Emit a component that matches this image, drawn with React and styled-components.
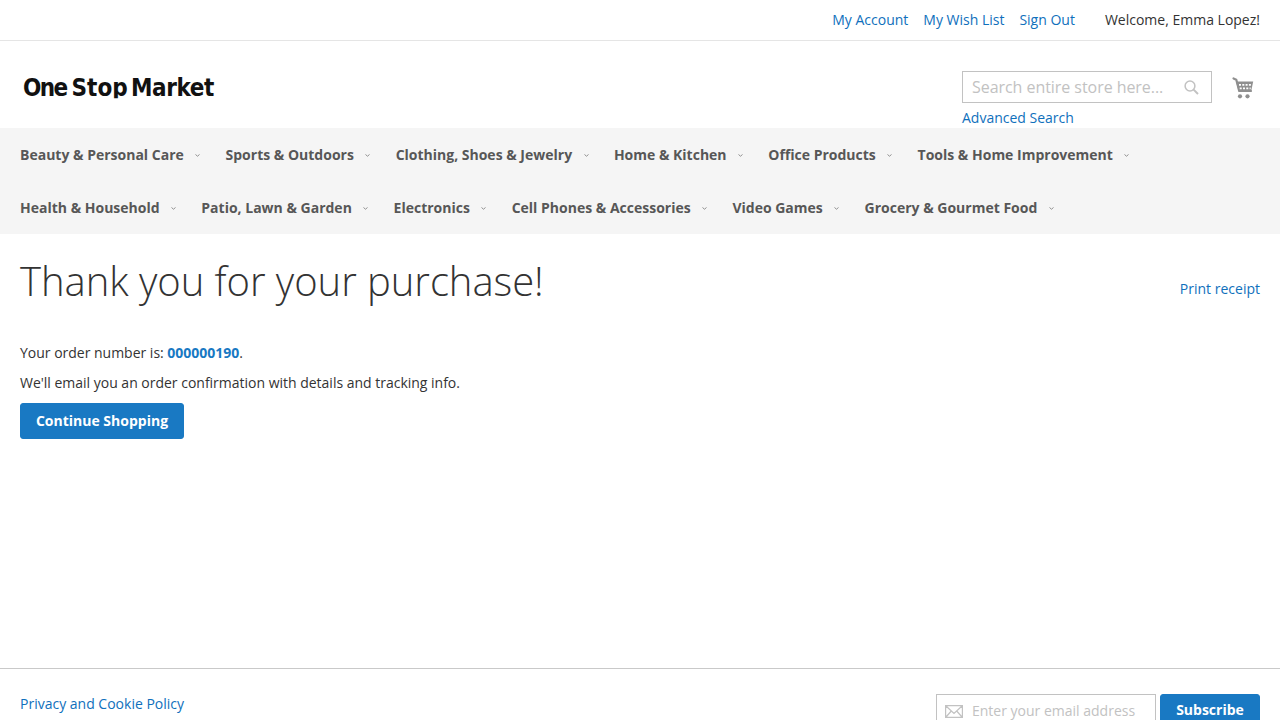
import React from 'react';
import styled, { createGlobalStyle } from 'styled-components';

const GlobalStyle = createGlobalStyle`
  *, *::before, *::after { box-sizing: border-box; }
  html, body { margin: 0; height: 100%; overflow: hidden; }
  body {
    background: #fff;
    color: #333;
    font: 400 14px/20px 'Open Sans', 'Noto Sans', sans-serif;
  }
`;

const Page = styled.div`
  display: flex;
  flex-direction: column;
`;

const Link = styled.a`
  color: ${(p) => (p.$strong ? '#1979c3' : '#0f70bc')};
  text-decoration: none;
  cursor: pointer;
  font-weight: ${(p) => (p.$strong ? 700 : 400)};
`;

const TopPanel = styled.div`
  display: flex;
  justify-content: flex-end;
  gap: 15px;
  height: 41px;
  padding: 10px 20px 0;
  border-bottom: 1px solid #e5e5e5;
`;

const Greeting = styled.span`
  margin-left: 15px;
`;

const Header = styled.header`
  display: flex;
  align-items: flex-start;
  height: 87px;
  padding: 30px 20px 0;
`;

/* The wordmark's descender is trimmed just under the baseline. */
const Logo = styled.div`
  display: flex;
  height: 34px;
  margin-right: auto;
  padding-left: 3px;
  clip-path: inset(0 0 6.7px 0);
  color: #111;
  font: 700 24px/34px 'DejaVu Sans Condensed', 'DejaVu Sans', sans-serif;
  font-stretch: condensed;
`;

const LogoWord = styled.span`
  width: ${(p) => p.$width}px;
  letter-spacing: ${(p) => p.$spacing}px;
  white-space: nowrap;
`;

const SearchBlock = styled.div`
  width: 250px;
`;

const SearchField = styled.div`
  display: flex;
  align-items: center;
  justify-content: space-between;
  height: 32px;
  margin-bottom: 5px;
  padding: 0 12px 0 9px;
  border: 1px solid #c2c2c2;
  color: #c2c2c2;
  font-size: 16px;
  letter-spacing: -0.05px;
`;

const CartIcon = styled.svg`
  display: block;
  width: 22px;
  height: 22px;
  margin: 6px 6px 0 20px;
`;

const Nav = styled.nav`
  height: 106px;
  padding: 0 20px;
  background: #f5f5f5;
`;

const NavRow = styled.div`
  display: flex;
  height: 53px;
`;

const NavItem = styled.a`
  display: flex;
  align-items: center;
  margin-right: 25.25px;
  color: #575757;
  font-weight: 700;
  white-space: nowrap;
`;

const Chevron = styled.svg`
  display: block;
  width: 5px;
  height: 3px;
  margin: 2px 0 0 11.5px;
`;

const Main = styled.main`
  height: 434px;
  padding: 20px 20px 0;
`;

const TitleRow = styled.div`
  display: flex;
  justify-content: space-between;
  height: 89px;
`;

const Title = styled.h1`
  margin: 5px 0 0;
  font-size: 40px;
  line-height: 44px;
  font-weight: 300;
  letter-spacing: -0.04px;
`;

const PrintLink = styled(Link)`
  margin-top: 25px;
`;

const Paragraph = styled.p`
  margin: 0 0 10px;
  letter-spacing: -0.01px;
`;

const Button = styled.button`
  display: block;
  height: ${(p) => (p.$height || 36)}px;
  width: ${(p) => p.$width}px;
  padding: 0;
  border: 1px solid #1979c3;
  border-radius: 3px;
  background: #1979c3;
  color: #fff;
  font: 700 14px/16px 'Open Sans', 'Noto Sans', sans-serif;
`;

const Footer = styled.footer`
  display: flex;
  justify-content: space-between;
  padding: 25px 20px 0;
  border-top: 1px solid #c9c9c9;
`;

const Newsletter = styled.div`
  display: flex;
  gap: 4px;
`;

const EmailField = styled.div`
  display: flex;
  align-items: center;
  gap: 9px;
  width: 220px;
  height: 34px;
  padding-left: 8px;
  border: 1px solid #c2c2c2;
  color: #c2c2c2;
`;

const PolicyLink = styled(Link)`
  height: 20px;
`;

const categories = [
  ['Beauty & Personal Care', 'Sports & Outdoors', 'Clothing, Shoes & Jewelry', 'Home & Kitchen', 'Office Products', 'Tools & Home Improvement'],
  ['Health & Household', 'Patio, Lawn & Garden', 'Electronics', 'Cell Phones & Accessories', 'Video Games', 'Grocery & Gourmet Food'],
];

export default function App() {
  return (
    <Page>
      <GlobalStyle />
      <TopPanel>
        <Link>My Account</Link>
        <Link>My Wish List</Link>
        <Link>Sign Out</Link>
        <Greeting>Welcome, Emma Lopez!</Greeting>
      </TopPanel>
      <Header>
        <Logo>
          <LogoWord $width={48.5} $spacing={-1.6}>One</LogoWord>
          <LogoWord $width={59.5} $spacing={0}>Stop</LogoWord>
          <LogoWord $width={85} $spacing={-0.4}>Market</LogoWord>
        </Logo>
        <SearchBlock>
          <SearchField>
            <span>Search entire store here...</span>
            <svg width="15" height="15" viewBox="0 0 15 15" fill="none" stroke="#c2c2c2">
              <circle cx="6" cy="6" r="4.9" strokeWidth="1.5" />
              <path d="M9.6 9.6 14 14" strokeWidth="2" />
            </svg>
          </SearchField>
          <Link>Advanced Search</Link>
        </SearchBlock>
        <CartIcon viewBox="0 0 22 22">
          <path d="M1.5 1.5 4.3 2.7 7.2 14H19" fill="none" stroke="#8f8f8f" strokeWidth="2.2" strokeLinecap="round" strokeLinejoin="round" />
          <path d="M4 4.5H21.2L19 15H6.8Z" fill="#8f8f8f" />
          <path d="M7 7.8H19.3M7.7 11.3H18.7" stroke="#fff" strokeWidth="1.8" strokeDasharray="2 1.3" />
          <circle cx="8" cy="19.3" r="2.1" fill="#8f8f8f" />
          <circle cx="15.5" cy="19.3" r="2.1" fill="#8f8f8f" />
        </CartIcon>
      </Header>
      <Nav>
        {categories.map((row) => (
          <NavRow key={row[0]}>
            {row.map((name) => (
              <NavItem key={name}>
                {name}
                <Chevron viewBox="0 0 5 3">
                  <path d="M.5.5 2.5 2.2 4.5.5" fill="none" stroke="#8f8f8f" strokeWidth="1" />
                </Chevron>
              </NavItem>
            ))}
          </NavRow>
        ))}
      </Nav>
      <Main>
        <TitleRow>
          <Title>Thank you for your purchase!</Title>
          <PrintLink>Print receipt</PrintLink>
        </TitleRow>
        <Paragraph>Your order number is: <Link $strong>000000190</Link>.</Paragraph>
        <Paragraph>We'll email you an order confirmation with details and tracking info.</Paragraph>
        <Button $width={164}>Continue Shopping</Button>
      </Main>
      <Footer>
        <PolicyLink>Privacy and Cookie Policy</PolicyLink>
        <Newsletter>
          <EmailField>
            <svg width="18" height="13" viewBox="0 0 18 13" fill="none" stroke="#c2c2c2" strokeWidth="1.2">
              <path d="M.6.6H17.4V12.4H.6ZM1 1 9 8.5 17 1M1 12 6.3 6M17 12 11.7 6" />
            </svg>
            <span>Enter your email address</span>
          </EmailField>
          <Button $width={100} $height={32}>Subscribe</Button>
        </Newsletter>
      </Footer>
    </Page>
  );
}
